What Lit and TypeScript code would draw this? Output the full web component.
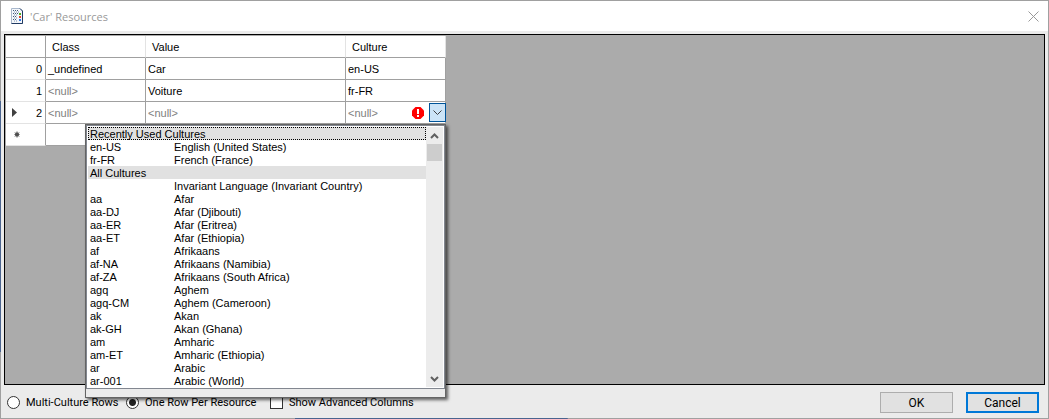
import { LitElement, html, css } from "lit";
import { customElement, state } from "lit/decorators.js";

interface Row {
  marker: string;
  index: string;
  cls: string | null;
  value: string | null;
  culture: string | null;
}

interface CultureItem {
  code: string;
  name?: string;
  heading?: boolean;
}

const ROWS: Row[] = [
  { marker: "", index: "0", cls: "_undefined", value: "Car", culture: "en-US" },
  { marker: "", index: "1", cls: null, value: "Voiture", culture: "fr-FR" },
  { marker: "current", index: "2", cls: null, value: null, culture: null },
  { marker: "new", index: "", cls: "", value: "", culture: "" },
];

const CULTURES: CultureItem[] = [
  { code: "Recently Used Cultures", heading: true },
  { code: "en-US", name: "English (United States)" },
  { code: "fr-FR", name: "French (France)" },
  { code: "All Cultures", heading: true },
  { code: "", name: "Invariant Language (Invariant Country)" },
  { code: "aa", name: "Afar" },
  { code: "aa-DJ", name: "Afar (Djibouti)" },
  { code: "aa-ER", name: "Afar (Eritrea)" },
  { code: "aa-ET", name: "Afar (Ethiopia)" },
  { code: "af", name: "Afrikaans" },
  { code: "af-NA", name: "Afrikaans (Namibia)" },
  { code: "af-ZA", name: "Afrikaans (South Africa)" },
  { code: "agq", name: "Aghem" },
  { code: "agq-CM", name: "Aghem (Cameroon)" },
  { code: "ak", name: "Akan" },
  { code: "ak-GH", name: "Akan (Ghana)" },
  { code: "am", name: "Amharic" },
  { code: "am-ET", name: "Amharic (Ethiopia)" },
  { code: "ar", name: "Arabic" },
  { code: "ar-001", name: "Arabic (World)" },
];

@customElement("culture-list")
export class CultureList extends LitElement {
  static styles = css`
    :host {
      display: block;
      box-sizing: border-box;
      border: 1px solid #646464;
      background: #ebebeb;
      padding-bottom: 8px;
      box-shadow: 2px 2px 3px rgba(0, 0, 0, 0.6);
      color: #000;
    }
    .frame {
      display: flex;
      border: 1px solid #828790;
      background: #fff;
      padding: 1px;
    }
    .items {
      flex: 1;
      margin: 0;
      padding: 0;
      list-style: none;
    }
    .item {
      display: grid;
      grid-template-columns: 84px 1fr;
      box-sizing: border-box;
      height: 13px;
      line-height: 12px;
      padding: 1px 0 0 2px;
      white-space: nowrap;
    }
    .heading {
      display: block;
      background: #e1e1e1;
    }
    .focused {
      outline: 1px dotted #000;
      outline-offset: -1px;
    }
    .scroll {
      display: flex;
      flex-direction: column;
      width: 17px;
      background: #ececec;
    }
    .arrow {
      appearance: none;
      border: 0;
      padding: 0;
      height: 17px;
      background: none;
      display: grid;
      place-items: center;
    }
    .thumb {
      height: 17px;
      margin: 0 1px;
      background: #cdcdcd;
    }
    .space {
      flex: 1;
    }
  `;

  render() {
    return html`
      <div class="frame">
        <ul class="items" role="listbox" aria-label="Culture">
          ${CULTURES.map((c, i) =>
            c.heading
              ? html`<li class="item heading ${i === 0 ? "focused" : ""}">${c.code}</li>`
              : html`<li class="item" role="option"><span>${c.code}</span><span>${c.name}</span></li>`
          )}
        </ul>
        <div class="scroll">
          <button class="arrow" aria-label="Scroll up">
            <svg width="9" height="6"><path d="M1 5 4.500 1.500 8 5" fill="none" stroke="#606060" stroke-width="2" /></svg>
          </button>
          <div class="thumb"></div>
          <div class="space"></div>
          <button class="arrow" aria-label="Scroll down">
            <svg width="9" height="6"><path d="M1 1 4.500 4.500 8 1" fill="none" stroke="#606060" stroke-width="2" /></svg>
          </button>
        </div>
      </div>
    `;
  }
}

@customElement("app-root")
export class AppRoot extends LitElement {
  @state() private open = true;

  static styles = css`
    :host {
      display: flex;
      flex-direction: column;
      box-sizing: border-box;
      min-height: 100vh;
      border: 1px solid transparent;
      background:
        linear-gradient(#ebebeb, #ebebeb) padding-box,
        linear-gradient(#4a648f, #4a648f) 0 60% / 1px 60% no-repeat border-box,
        linear-gradient(#4a648f, #4a648f) 38% 100% / 26% 1px no-repeat border-box,
        linear-gradient(#a0a0a0, #a0a0a0) border-box;
      font: 11px "Liberation Sans", Arial, sans-serif;
      color: #000;
    }
    .title {
      display: flex;
      align-items: center;
      gap: 6px;
      height: 30px;
      padding: 0 9px;
      background: #fff;
    }
    .name {
      flex: 1;
      margin: 0;
      font: 11px "Open Sans", "Noto Sans", sans-serif;
      color: #999;
    }
    .close {
      appearance: none;
      border: 0;
      padding: 0;
      background: none;
      display: grid;
    }
    .grid {
      flex: 1;
      margin: 3px 3px 0;
      border: 1px solid #000;
      background: #ababab;
      padding: 1px;
    }
    table {
      table-layout: fixed;
      width: 440px;
      border-collapse: separate;
      border-spacing: 0;
    }
    th,
    td {
      box-sizing: border-box;
      height: 22px;
      padding: 0 3px 0 2px;
      border-right: 1px solid #a0a0a0;
      border-bottom: 1px solid #a0a0a0;
      background: #fff;
      font-weight: 400;
      text-align: left;
      white-space: nowrap;
      position: relative;
    }
    thead th {
      padding-left: 6px;
      border-right-color: #e3e3e3;
    }
    thead th:first-child {
      border-right-color: #a0a0a0;
    }
    tbody th {
      border-bottom-color: #e3e3e3;
      padding-left: 6px;
    }
    .c0 {
      width: 40px;
    }
    .c1,
    .c3 {
      width: 100px;
    }
    .c2 {
      width: 200px;
    }
    .head,
    .edit {
      display: flex;
      align-items: center;
      justify-content: space-between;
    }
    .index {
      margin-left: auto;
    }
    .null {
      color: #808080;
    }
    .error {
      margin-left: auto;
      margin-right: 5px;
    }
    .edit {
      height: 21px;
      margin-right: -4px;
    }
    .drop {
      appearance: none;
      box-sizing: border-box;
      width: 17px;
      height: 19px;
      padding: 0;
      border: 1px solid #005499;
      background: #cce4f7;
      display: grid;
      place-items: center;
    }
    .popup {
      position: absolute;
      z-index: 1;
      top: 22px;
      right: -1px;
      width: 361px;
    }
    .footer {
      display: flex;
      align-items: center;
      justify-content: space-between;
      box-sizing: border-box;
      height: 33px;
      padding: 2px 9px 0 6px;
      font-family: Roboto, "Liberation Sans", sans-serif;
    }
    .options {
      display: grid;
      grid-template-columns: 119px 144px auto;
      margin: 0;
      padding: 0;
      border: 0;
    }
    .option {
      display: flex;
      align-items: center;
      gap: 6px;
      white-space: nowrap;
    }
    input {
      appearance: none;
      box-sizing: border-box;
      width: 13px;
      height: 13px;
      margin: 0;
      border: 1px solid #333;
      background: #fff;
    }
    input[type="radio"] {
      border-radius: 50%;
    }
    input[type="radio"]:checked {
      background: radial-gradient(circle, #222 3px, #fff 4px);
    }
    .actions {
      display: flex;
      gap: 13px;
    }
    .btn {
      box-sizing: border-box;
      width: 73px;
      height: 21px;
      padding: 0;
      border: 1px solid #adadad;
      background: #e1e1e1;
      font: 12px Roboto, "Liberation Sans", sans-serif;
      color: #000;
    }
    .active {
      border: 2px solid #0078d7;
    }
  `;

  private cell(text: string | null) {
    return text === null ? html`<span class="null">&lt;null&gt;</span>` : text;
  }

  private marker(kind: string) {
    if (kind === "current") {
      return html`<svg width="5" height="9"><path d="M0 0 5 4.500 0 9Z" fill="#404040" /></svg>`;
    }
    if (kind === "new") {
      return html`<svg width="9" height="7" viewBox="-2 0 9 7"><path d="M3 0.500v6M0.500 3.500h5M1 1.500l4 4M5 1.500 1 5.500" stroke="#505050" /><circle cx="3" cy="3.500" r="2" fill="#505050" /></svg>`;
    }
    return "";
  }

  private editor() {
    return html`
      <div class="edit">
        ${this.cell(null)}
        <svg class="error" width="12" height="12" viewBox="0 0 12 12" role="img" aria-label="Error">
          <path d="M3.500 0h5L12 3.500v5L8.500 12h-5L0 8.500v-5Z" fill="#f00" />
          <path d="M5 2h2v5H5ZM5 8h2v2H5Z" fill="#fff" />
        </svg>
        <button class="drop" aria-label="Choose culture" @click=${() => (this.open = !this.open)}>
          <svg width="9" height="6"><path d="M0.500 0.500 4.500 4.500 8.500 0.500" fill="none" stroke="#404040" /></svg>
        </button>
      </div>
      ${this.open ? html`<culture-list class="popup"></culture-list>` : ""}
    `;
  }

  render() {
    return html`
      <header class="title">
        <svg width="14" height="16" viewBox="0 0 14 16" aria-hidden="true">
          <path d="M1.500 0.500H10L12.500 3V15.500H1.500Z" fill="#f4f7fb" stroke="#a9b8cc" />
          <path d="M10 0.500 12.500 3V15.500H1.500" fill="none" stroke="#203a63" />
          <path d="M3 2.500h6M3 5.500h5M3 8.500h4M3 11.500h4" stroke="#42597a" stroke-dasharray="1 1" />
          <path d="M4 4h5M4 7h3M4 10h3M4 13h3" stroke="#7d90aa" stroke-dasharray="1 1" />
          <path d="M9 5h2v2H9Z" fill="#4fae20" />
          <path d="M9 8h2v2H9Z" fill="#e8452c" />
          <path d="M9 11h2v2H9Z" fill="#3478e8" />
        </svg>
        <h1 class="name">'Car' Resources</h1>
        <button class="close" aria-label="Close">
          <svg width="11" height="11"><path d="M0.500 0.500 10.500 10.500M10.500 0.500 0.500 10.500" stroke="#999" /></svg>
        </button>
      </header>
      <main class="grid">
        <table>
          <thead>
            <tr>
              <th class="c0"></th>
              <th class="c1">Class</th>
              <th class="c2">Value</th>
              <th class="c3">Culture</th>
            </tr>
          </thead>
          <tbody>
            ${ROWS.map(
              (r) => html`<tr>
                <th>
                  <div class="head">${this.marker(r.marker)}<span class="index">${r.index}</span></div>
                </th>
                <td>${this.cell(r.cls)}</td>
                <td>${this.cell(r.value)}</td>
                <td>${r.marker === "current" ? this.editor() : this.cell(r.culture)}</td>
              </tr>`
            )}
          </tbody>
        </table>
      </main>
      <footer class="footer">
        <fieldset class="options" aria-label="View">
          <label class="option"><input type="radio" name="mode" />Multi-Culture Rows</label>
          <label class="option"><input type="radio" name="mode" checked />One Row Per Resource</label>
          <label class="option"><input type="checkbox" />Show Advanced Columns</label>
        </fieldset>
        <div class="actions">
          <button class="btn">OK</button>
          <button class="btn active">Cancel</button>
        </div>
      </footer>
    `;
  }
}
